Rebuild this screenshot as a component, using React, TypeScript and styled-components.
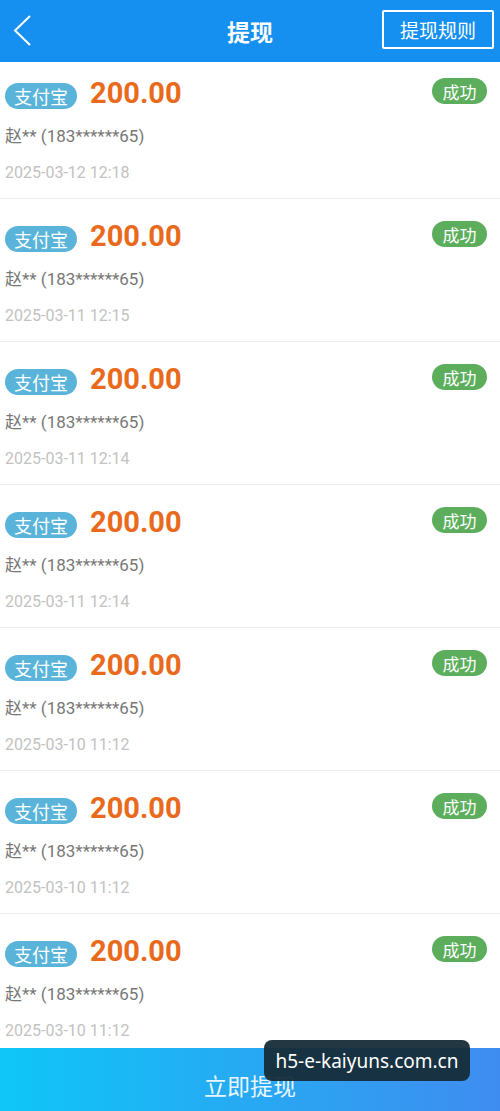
import React from "react";
import styled, { createGlobalStyle } from "styled-components";

const Global = createGlobalStyle`
  html, body { margin: 0; padding: 0; background: #fff; }
  body { font-family: Roboto, "Noto Sans CJK SC", sans-serif; }
  * { box-sizing: border-box; }
`;

const Page = styled.div`
  width: 500px;
  height: 1111px;
  display: flex;
  flex-direction: column;
  overflow: hidden;
  position: relative;
  background: #fff;
`;

const Header = styled.div`
  height: 62px;
  flex: none;
  background: #1590f0;
  display: grid;
  grid-template-columns: 1fr auto 1fr;
  align-items: center;
  padding: 0 6px 0 12px;
  position: relative;
  z-index: 1;
`;

const Back = styled.div`
  display: flex;
  align-items: center;
`;

const Title = styled.div`
  color: #fff;
  font-size: 23px;
  font-weight: 700;
  font-family: "Noto Sans CJK SC", sans-serif;
  margin-left: -6px;
`;

const RuleButton = styled.div`
  justify-self: end;
  width: 112px;
  height: 39px;
  margin-top: -4px;
  border: 2px solid #fff;
  border-radius: 2px;
  color: #fff;
  font-size: 19px;
  font-family: "Noto Sans CJK SC", sans-serif;
  display: flex;
  align-items: center;
  justify-content: center;
`;

const List = styled.div`
  flex: 1;
  overflow: hidden;
  margin-top: -6px;
`;

const Item = styled.div`
  height: 143px;
  border-bottom: 1px solid #ebebeb;
  padding: 21px 13px 0 5px;
  display: flex;
  flex-direction: column;
`;

const TopRow = styled.div`
  display: flex;
  align-items: flex-start;
  height: 38px;
`;

const Channel = styled.div`
  margin-top: 6px;
  height: 26px;
  width: 72px;
  border-radius: 13px;
  background: #5ab4da;
  color: #fff;
  font-size: 18px;
  font-family: "Noto Sans CJK SC", sans-serif;
  display: flex;
  align-items: center;
  justify-content: center;
  line-height: 1;
`;

const Amount = styled.div`
  margin-left: 13px;
  margin-top: -3px;
  color: #e96a1c;
  font-size: 29px;
  font-weight: 700;
  font-family: Roboto, sans-serif;
  line-height: 38px;
`;

const Status = styled.div`
  margin-left: auto;
  margin-top: 1px;
  height: 26px;
  width: 55px;
  border-radius: 13px;
  background: #5cae5c;
  color: #fff;
  font-size: 17px;
  font-family: "Noto Sans CJK SC", sans-serif;
  display: flex;
  align-items: center;
  justify-content: center;
  line-height: 1;
`;

const Name = styled.div`
  margin-top: 9px;
  color: #777;
  font-size: 17px;
  line-height: 24px;
  font-family: Roboto, "Noto Sans CJK SC", sans-serif;
`;

const Time = styled.div`
  margin-top: 14px;
  color: #c2c2c2;
  font-size: 16px;
  line-height: 22px;
  font-family: Roboto, sans-serif;
`;

const Submit = styled.div`
  height: 63px;
  flex: none;
  background: linear-gradient(90deg, #0fc6f8 0%, #2aa6f2 55%, #3f8cf0 100%);
  color: #e8f6ff;
  font-size: 23px;
  font-family: "Noto Sans CJK SC", sans-serif;
  display: flex;
  align-items: center;
  justify-content: center;
  padding-top: 10px;
`;

const Watermark = styled.div`
  position: absolute;
  left: 264px;
  top: 1040px;
  width: 206px;
  height: 41px;
  border-radius: 8px;
  background: rgba(22, 44, 56, 0.95);
  color: #fff;
  font-size: 19px;
  font-family: "Noto Sans", sans-serif;
  display: flex;
  align-items: center;
  justify-content: center;
`;

const records = [
  "2025-03-12 12:18",
  "2025-03-11 12:15",
  "2025-03-11 12:14",
  "2025-03-11 12:14",
  "2025-03-10 11:12",
  "2025-03-10 11:12",
  "2025-03-10 11:12",
];

export default function App() {
  return (
    <Page>
      <Global />
      <Header>
        <Back>
          <svg width="22" height="34" viewBox="0 0 22 34">
            <polyline points="18,2 3,16.5 18,31" fill="none" stroke="#fff" strokeWidth="2" />
          </svg>
        </Back>
        <Title>提现</Title>
        <RuleButton>提现规则</RuleButton>
      </Header>
      <List>
        {records.map((t, i) => (
          <Item key={i}>
            <TopRow>
              <Channel>支付宝</Channel>
              <Amount>200.00</Amount>
              <Status>成功</Status>
            </TopRow>
            <Name>赵** (183******65)</Name>
            <Time>{t}</Time>
          </Item>
        ))}
      </List>
      <Submit>立即提现</Submit>
      <Watermark>h5-e-kaiyuns.com.cn</Watermark>
    </Page>
  );
}
